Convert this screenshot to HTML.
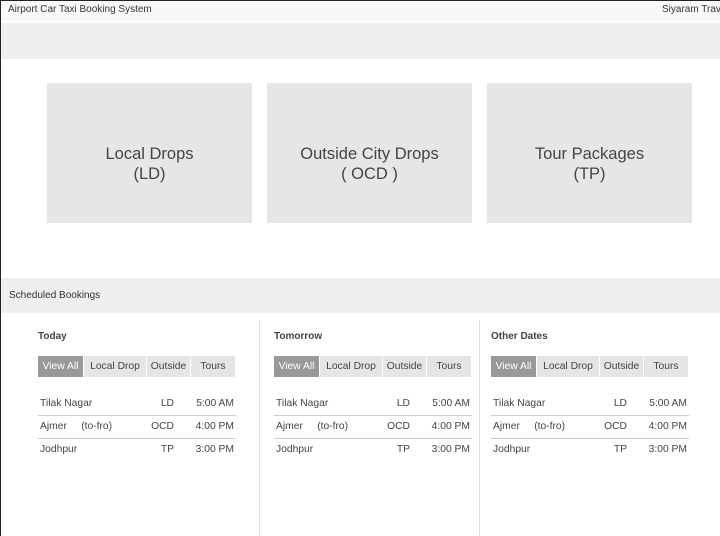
<!DOCTYPE html>
<html><head><style>
body{margin:0;width:720px;height:536px;overflow:hidden;background:#fff;font-family:"Liberation Sans",sans-serif;color:#333;position:relative}
.frame{position:absolute;left:0;top:0;width:720px;height:536px;border-left:1px solid #222;border-top:1px solid #222;box-sizing:border-box}
.hdr{position:absolute;left:1px;top:1px;width:719px;height:19px;background:#f8f8f8;font-size:10px;line-height:18px}
.hdr .l{position:absolute;left:7px}
.hdr .r{position:absolute;left:661px;white-space:nowrap}
.band{position:absolute;left:1px;top:23px;width:719px;height:36px;background:#eee}
.card{position:absolute;top:83px;width:205px;height:140px;background:#e6e6e6;text-align:center;font-size:16.5px;color:#444;line-height:20px;box-sizing:border-box;padding-top:61px}
.sb{position:absolute;left:1px;top:278px;width:719px;height:35px;background:#eee;font-size:10px;line-height:36px;padding-left:8px;box-sizing:border-box}
.div{position:absolute;top:320px;width:1px;height:216px;background:#ddd}
.col{position:absolute;top:320px;width:198px;font-size:10.3px}
.col h4{margin:0;position:absolute;top:11px;left:0;font-size:10px;font-weight:bold;color:#444}
.tabs{position:absolute;top:36px;left:0;height:21px;display:flex}
.tabs span{background:#e5e5e5;color:#444;line-height:22px;text-align:center;margin-right:1px}
.tabs span.a{background:#999;color:#fff}
.rows{position:absolute;top:73px;left:0;width:198px}
.row{height:22px;line-height:22px;border-bottom:1px solid #ccc;position:relative;color:#444}
.row:last-child{border-bottom:none}
.row .n{position:absolute;left:2px}
.row .c{position:absolute;right:62px}
.row .t{position:absolute;right:2px}
</style></head><body>
<div class="frame"></div>
<div class="hdr"><span class="l">Airport Car Taxi Booking System</span><span class="r">Siyaram Travels</span></div>
<div class="band"></div>
<div class="card" style="left:47px">Local Drops<br>(LD)</div>
<div class="card" style="left:267px">Outside City Drops<br>( OCD )</div>
<div class="card" style="left:487px">Tour Packages<br>(TP)</div>
<div class="sb">Scheduled Bookings</div>
<div class="div" style="left:259px"></div>
<div class="div" style="left:479px"></div>

<div class="col" style="left:38px"><h4>Today</h4>
<div class="tabs"><span class="a" style="width:45px">View All</span><span style="width:62px">Local Drop</span><span style="width:43px">Outside</span><span style="width:44px">Tours</span></div>
<div class="rows"><div class="row"><span class="n">Tilak Nagar</span><span class="c">LD</span><span class="t">5:00 AM</span></div><div class="row"><span class="n">Ajmer &nbsp;&nbsp;&nbsp;&nbsp;(to-fro)</span><span class="c">OCD</span><span class="t">4:00 PM</span></div><div class="row"><span class="n">Jodhpur</span><span class="c">TP</span><span class="t">3:00 PM</span></div></div></div>

<div class="col" style="left:274px"><h4>Tomorrow</h4>
<div class="tabs"><span class="a" style="width:45px">View All</span><span style="width:62px">Local Drop</span><span style="width:43px">Outside</span><span style="width:44px">Tours</span></div>
<div class="rows"><div class="row"><span class="n">Tilak Nagar</span><span class="c">LD</span><span class="t">5:00 AM</span></div><div class="row"><span class="n">Ajmer &nbsp;&nbsp;&nbsp;&nbsp;(to-fro)</span><span class="c">OCD</span><span class="t">4:00 PM</span></div><div class="row"><span class="n">Jodhpur</span><span class="c">TP</span><span class="t">3:00 PM</span></div></div></div>

<div class="col" style="left:491px"><h4>Other Dates</h4>
<div class="tabs"><span class="a" style="width:45px">View All</span><span style="width:62px">Local Drop</span><span style="width:43px">Outside</span><span style="width:44px">Tours</span></div>
<div class="rows"><div class="row"><span class="n">Tilak Nagar</span><span class="c">LD</span><span class="t">5:00 AM</span></div><div class="row"><span class="n">Ajmer &nbsp;&nbsp;&nbsp;&nbsp;(to-fro)</span><span class="c">OCD</span><span class="t">4:00 PM</span></div><div class="row"><span class="n">Jodhpur</span><span class="c">TP</span><span class="t">3:00 PM</span></div></div></div>
</body></html>
